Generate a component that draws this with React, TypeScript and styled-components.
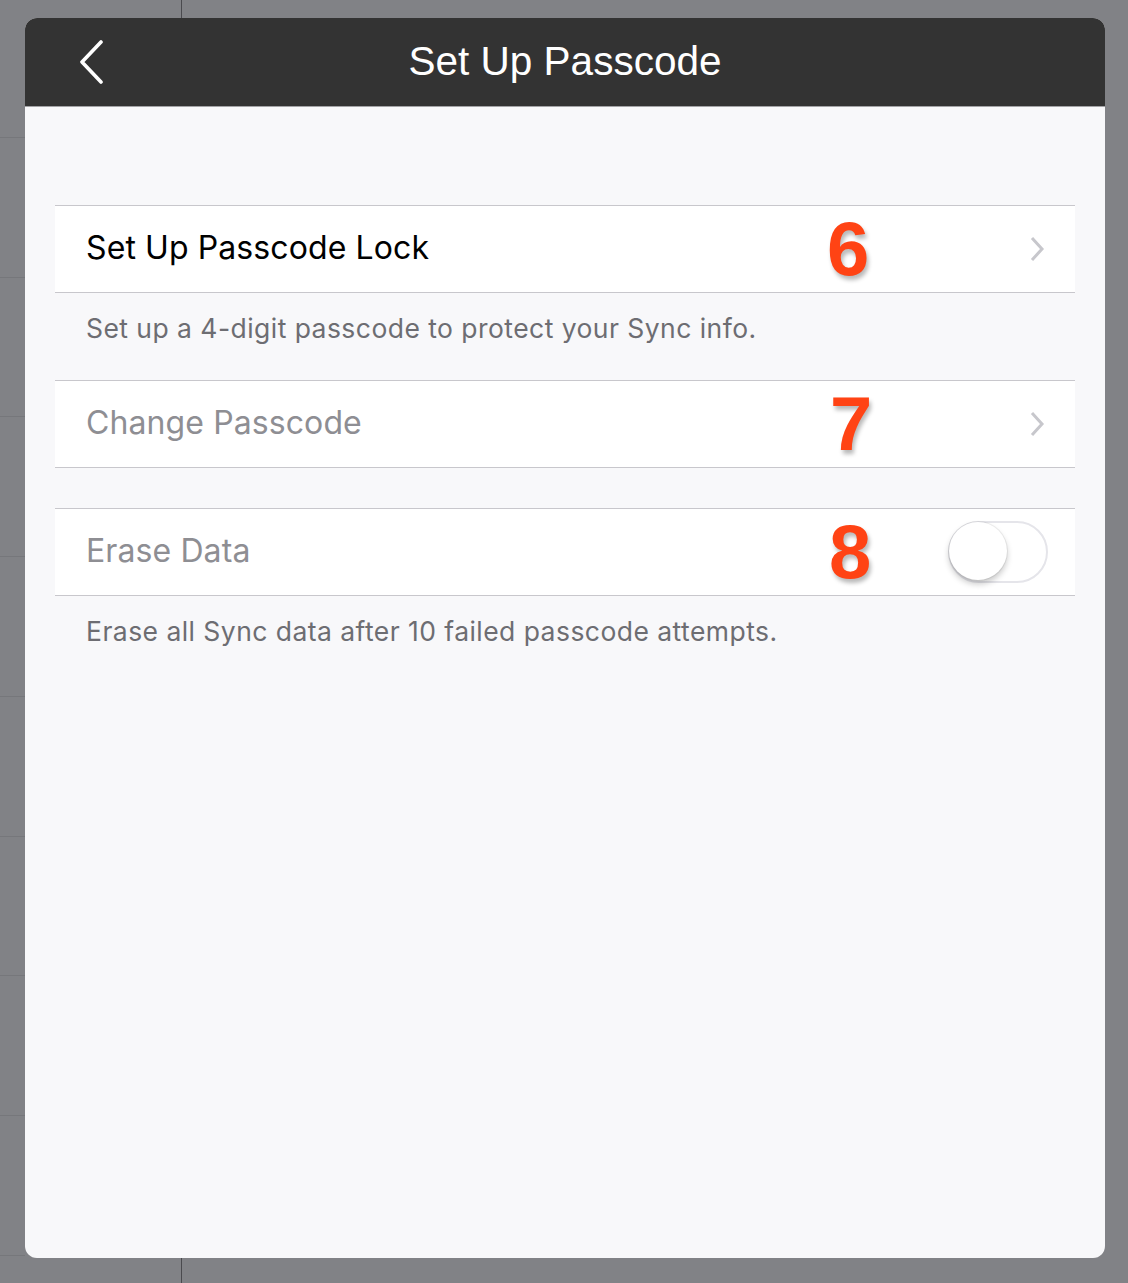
import React from "react";
import styled, { createGlobalStyle } from "styled-components";

const Global = createGlobalStyle`
  html, body {
    margin: 0;
    padding: 0;
  }
  body {
    min-height: 1283px;
    background-color: #818286;
    background-image:
      linear-gradient(to right, transparent 181px, #4a4a4e 181px, #4a4a4e 182px, transparent 182px),
      repeating-linear-gradient(to bottom, transparent 0px, transparent 137px, #76777b 137px, #76777b 138px, transparent 138px, transparent 139.7px);
    background-size: 100% 100%, 25px 100%;
    background-repeat: no-repeat, no-repeat;
    font-family: Inter, "Liberation Sans", sans-serif;
    -webkit-font-smoothing: antialiased;
  }
`;

const Page = styled.div`
  box-sizing: border-box;
  width: 1128px;
  height: 1283px;
  padding: 18px 23px 25px 25px;
  display: flex;
`;

const Sheet = styled.div`
  flex: 1;
  display: flex;
  flex-direction: column;
  border-radius: 12px;
  overflow: hidden;
  background: #f8f8fa;
`;

const NavBar = styled.header`
  height: 88px;
  flex: none;
  background: #333333;
  border-bottom: 1px solid #a3a3a6;
  display: flex;
  align-items: center;
  justify-content: center;
  position: relative;
`;

const BackButton = styled.button`
  position: absolute;
  left: 50px;
  top: 22px;
  width: 34px;
  height: 44px;
  padding: 0;
  border: none;
  background: transparent;
  display: flex;
  align-items: center;
  justify-content: center;
`;

const Title = styled.h1`
  margin: 0 0 2px 0;
  font-family: "Liberation Sans", Arial, sans-serif;
  font-weight: 400;
  font-size: 40.5px;
  color: #ffffff;
`;

const Content = styled.div`
  flex: 1;
  display: flex;
  flex-direction: column;
  padding: 98px 30px 0 30px;
`;

const Cell = styled.div<{ $gapTop?: number }>`
  position: relative;
  height: 86px;
  box-sizing: content-box;
  margin-top: ${(p) => p.$gapTop ?? 0}px;
  background: #ffffff;
  border-top: 1px solid #c8c7cc;
  border-bottom: 1px solid #c8c7cc;
  display: flex;
  align-items: center;
  padding: 0 27px 0 31px;
`;

const CellLabel = styled.span<{ $disabled?: boolean }>`
  flex: 1;
  padding-bottom: 3px;
  font-size: 32px;
  font-weight: 400;
  color: ${(p) => (p.$disabled ? "#8e8e93" : "#000000")};
  letter-spacing: 0.1px;
`;

const Chevron = styled.span`
  display: flex;
  width: 20px;
  justify-content: center;
  margin-right: 1px;
`;

const Marker = styled.span<{ $left: number }>`
  position: absolute;
  left: ${(p) => p.$left}px;
  top: 50%;
  transform: translateY(-50%);
  font-family: "Liberation Sans", Arial, sans-serif;
  font-weight: 700;
  font-size: 76px;
  line-height: 1;
  color: #ff4314;
  text-shadow: 2px 4px 4px rgba(0, 0, 0, 0.28);
`;

const Footer = styled.p<{ $height: number }>`
  margin: 0;
  height: ${(p) => p.$height}px;
  box-sizing: border-box;
  padding: 19px 31px 0 31px;
  font-size: 26.5px;
  line-height: 32px;
  color: #6d6d72;
  letter-spacing: 0.45px;
`;

const Switch = styled.div`
  width: 100px;
  height: 62px;
  box-sizing: border-box;
  border-radius: 31px;
  border: 2px solid #e5e5ea;
  background: #ffffff;
  position: relative;
`;

const Knob = styled.div`
  position: absolute;
  left: -1px;
  top: -1px;
  width: 58px;
  height: 58px;
  border-radius: 50%;
  background: #ffffff;
  box-shadow: 0 4px 6px rgba(0, 0, 0, 0.22), 0 0 0 1px rgba(0, 0, 0, 0.06);
`;

const ChevronIcon = () => (
  <svg width="16" height="26" viewBox="0 0 16 26">
    <path d="M3 2 L13 13 L3 24" fill="none" stroke="#c7c7cc" strokeWidth="3" strokeLinecap="butt" strokeLinejoin="miter" />
  </svg>
);

const BackIcon = () => (
  <svg width="26" height="44" viewBox="0 0 26 44">
    <path d="M22 2 L3 22 L22 42" fill="none" stroke="#ffffff" strokeWidth="3.6" strokeLinecap="round" strokeLinejoin="round" />
  </svg>
);

export default function App() {
  return (
    <>
      <Global />
      <Page>
        <Sheet>
          <NavBar>
            <BackButton aria-label="Back">
              <BackIcon />
            </BackButton>
            <Title>Set Up Passcode</Title>
          </NavBar>
          <Content>
            <Cell>
              <CellLabel>Set Up Passcode Lock</CellLabel>
              <Marker $left={772}>6</Marker>
              <Chevron>
                <ChevronIcon />
              </Chevron>
            </Cell>
            <Footer $height={87}>Set up a 4-digit passcode to protect your Sync info.</Footer>
            <Cell>
              <CellLabel $disabled>Change Passcode</CellLabel>
              <Marker $left={775}>7</Marker>
              <Chevron>
                <ChevronIcon />
              </Chevron>
            </Cell>
            <Cell $gapTop={40}>
              <CellLabel $disabled>Erase Data</CellLabel>
              <Marker $left={774}>8</Marker>
              <Switch>
                <Knob />
              </Switch>
            </Cell>
            <Footer $height={80}>Erase all Sync data after 10 failed passcode attempts.</Footer>
          </Content>
        </Sheet>
      </Page>
    </>
  );
}
